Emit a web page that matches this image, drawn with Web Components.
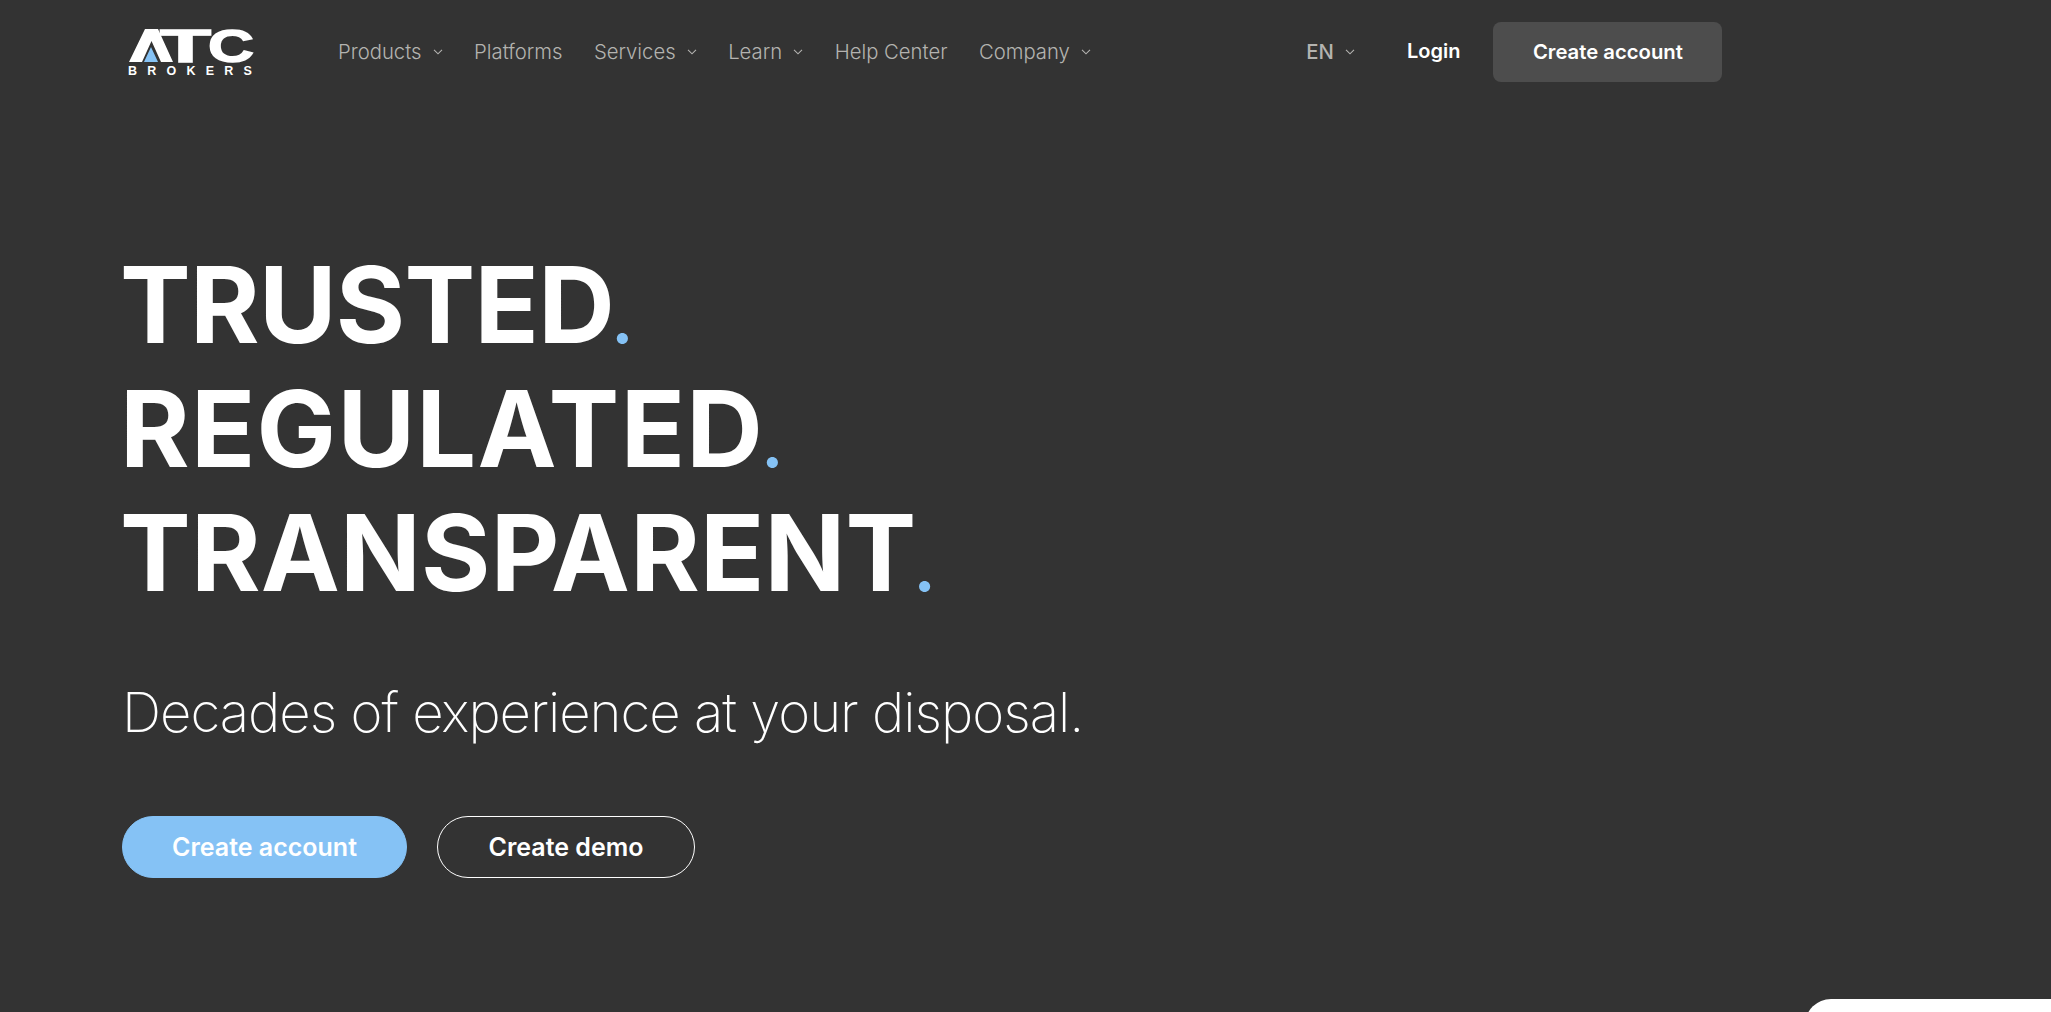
<!DOCTYPE html>
<html lang="en">
<head>
<meta charset="utf-8">
<title>ATC Brokers</title>
<style>
  html, body { margin: 0; height: 100%; background: #333; overflow: hidden; }
  body { font-family: Inter, "Liberation Sans", sans-serif; position: relative; }
</style>
</head>
<body>
<site-header></site-header>
<hero-section></hero-section>
<chat-tab></chat-tab>

<script>
"use strict";

const chevron = `<svg width="10" height="6" viewBox="0 0 10 6" fill="none" stroke="currentColor" stroke-width="1.1"><path d="M1 .8 5 4.8 9 .8"/></svg>`;

class AtcLogo extends HTMLElement {
    constructor() {
        super();
        this.attachShadow({ mode: 'open' }).innerHTML = `
        <style>
          :host { display: block; width: 124px; height: 49px; }
          svg { display: block; overflow: visible; }
          text { fill: #fff; stroke: #fff; stroke-width: 1.4; font-family: "Liberation Sans", Arial, sans-serif; font-weight: 700; }
          .sub { display: flex; justify-content: space-between; margin-top: 3px; color: #fff; font: 700 12.500px/11px "Liberation Sans", Arial, sans-serif; }
        </style>
        <svg width="124" height="35" viewBox="0 0 124 35">
          <path fill="#fff" d="M1 34 17 1H30L45 34H33L23.500 13 14 34Z"/>
          <path fill="#85c2f5" d="M16 34 23 19 30 34Z"/>
          <text x="32" y="34" font-size="46" textLength="51" lengthAdjust="spacingAndGlyphs">T</text>
          <text x="80" y="34" font-size="46" textLength="46" lengthAdjust="spacingAndGlyphs">C</text>
        </svg>
        <div class="sub"><span>B</span><span>R</span><span>O</span><span>K</span><span>E</span><span>R</span><span>S</span></div>`;
    }
}

class NavItem extends HTMLElement {
    constructor() {
        super();
        const caret = this.hasAttribute('menu') ? chevron : '';
        this.attachShadow({ mode: 'open' }).innerHTML = `
        <style>
          :host { display: inline-flex; align-items: center; gap: 11px; color: #b4b3b0; font-size: 20.300px; font-weight: 300; white-space: nowrap; padding-bottom: 2px; }
          :host([strong]) { font-weight: 500; }
          svg { margin-top: 2px; }
        </style>
        <slot></slot>${caret}`;
    }
}

class SiteHeader extends HTMLElement {
    constructor() {
        super();
        this.attachShadow({ mode: 'open' }).innerHTML = `
        <style>
          :host { display: flex; align-items: center; height: 60px; padding: 22px 0 0 128px; }
          nav { display: flex; align-items: center; gap: 31.500px; margin-left: 86px; }
          .right { display: flex; align-items: center; margin-left: 215.500px; }
          .login { color: #fff; font-size: 20px; font-weight: 600; margin-left: 52px; padding-bottom: 2px; }
          .cta { display: flex; align-items: center; justify-content: center; box-sizing: border-box; width: 229px; height: 60px; margin-left: 33px; padding-bottom: 2px;
                 background: #4d4d4d; border-radius: 8px; color: #fff; font-size: 20.300px; font-weight: 600; }
        </style>
        <atc-logo></atc-logo>
        <nav>
          <nav-item menu>Products</nav-item>
          <nav-item>Platforms</nav-item>
          <nav-item menu>Services</nav-item>
          <nav-item menu>Learn</nav-item>
          <nav-item>Help Center</nav-item>
          <nav-item menu>Company</nav-item>
        </nav>
        <div class="right">
          <nav-item menu strong>EN</nav-item>
          <span class="login">Login</span>
          <span class="cta">Create account</span>
        </div>`;
    }
}

class PillButton extends HTMLElement {
    constructor() {
        super();
        this.attachShadow({ mode: 'open' }).innerHTML = `
        <style>
          :host { display: inline-flex; align-items: center; justify-content: center; box-sizing: border-box; height: 62px;
                  border-radius: 31px; color: #fff; font-size: 25px; font-weight: 600; white-space: nowrap; border: 1px solid #fff; }
          :host([primary]) { background: #85c2f5; border-color: #85c2f5; }
        </style>
        <slot></slot>`;
    }
}

class HeroSection extends HTMLElement {
    constructor() {
        super();
        this.attachShadow({ mode: 'open' }).innerHTML = `
        <style>
          :host { display: block; padding: 161px 0 0 120px; color: #fff; }
          h1 { margin: 0; font-size: 106px; line-height: 124px; font-weight: 700; }
          h1 span { display: block; }
          h1 i { font-style: normal; color: #85c2f5; font-weight: 400; font-size: 84px; line-height: 0; letter-spacing: 0; margin-left: -4px; }
          p { margin: 63px 0 0 2px; font-size: 54.500px; line-height: 68px; font-weight: 200; letter-spacing: -1px; }
          .actions { display: flex; gap: 30px; margin: 70px 0 0 2px; }
          .a { width: 285px; }
          .b { width: 258px; }
        </style>
        <h1>
          <span style="letter-spacing:-.7px">TRUSTED<i>.</i></span>
          <span style="letter-spacing:1.3px">REGULATED<i>.</i></span>
          <span style="letter-spacing:.2px">TRANSPARENT<i>.</i></span>
        </h1>
        <p>Decades of experience at your disposal.</p>
        <div class="actions">
          <pill-button class="a" primary>Create account</pill-button>
          <pill-button class="b">Create demo</pill-button>
        </div>`;
    }
}

class ChatTab extends HTMLElement {
    constructor() {
        super();
        this.attachShadow({ mode: 'open' }).innerHTML = `
        <style>
          :host { position: absolute; left: 1805px; top: 999px; width: 300px; height: 60px; background: #fff; border-radius: 26px 0 0 0; }
        </style>`;
    }
}

customElements.define('atc-logo', AtcLogo);
customElements.define('nav-item', NavItem);
customElements.define('site-header', SiteHeader);
customElements.define('pill-button', PillButton);
customElements.define('hero-section', HeroSection);
customElements.define('chat-tab', ChatTab);
</script>
</body>
</html>
